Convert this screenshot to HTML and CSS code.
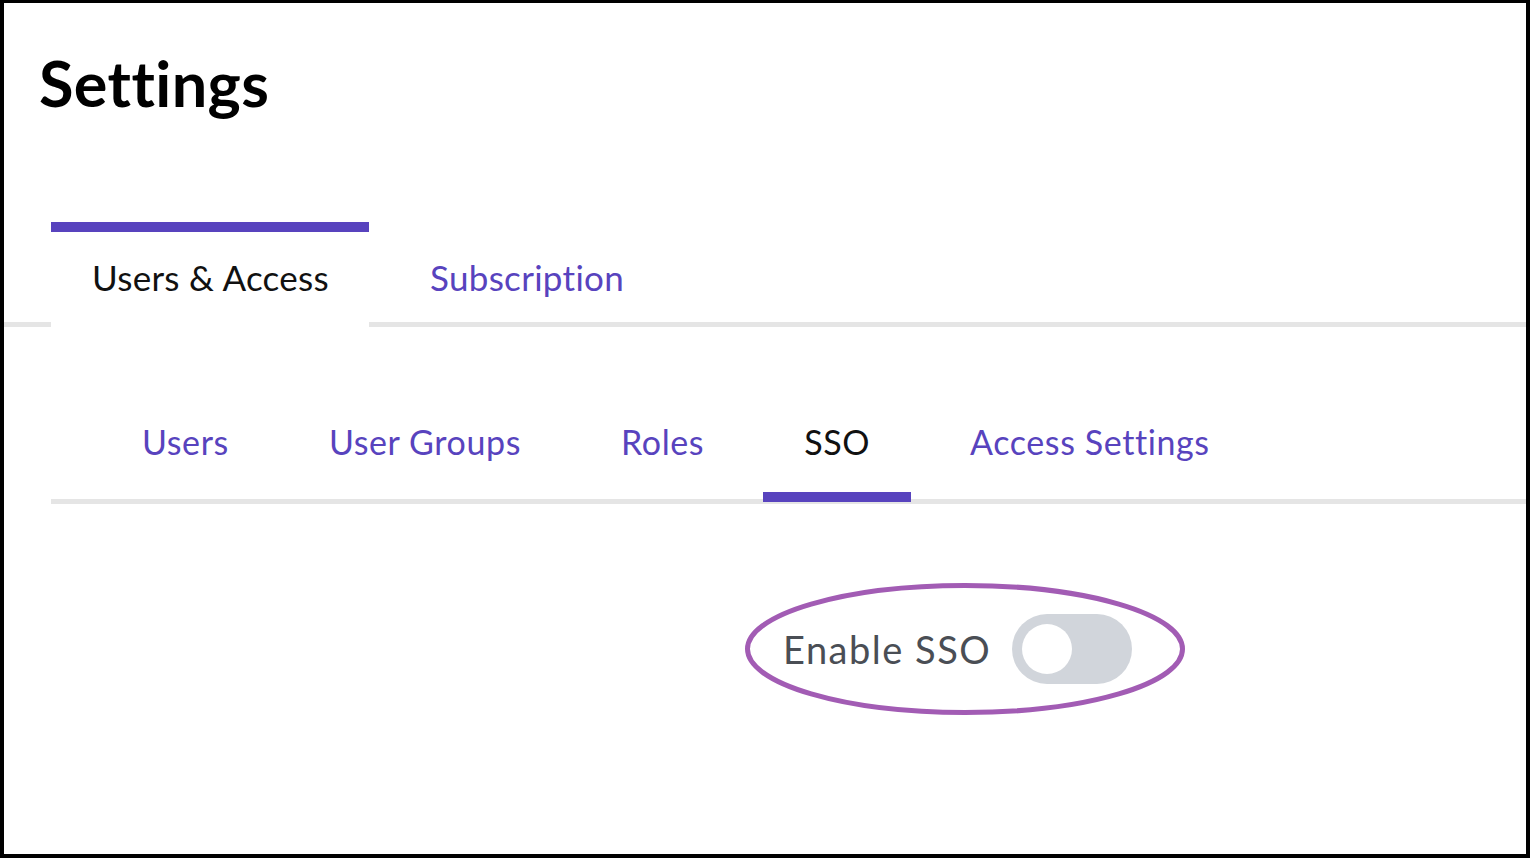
FILE: index.html
```html
<!DOCTYPE html>
<html lang="en">
<head>
<meta charset="utf-8">
<title>Settings</title>
<link rel="stylesheet" href="styles.css">
</head>
<body>
<div class="page">
  <h1 class="title">Settings</h1>
  <nav class="tabs">
    <a class="tab active">Users &amp; Access</a>
    <a class="tab">Subscription</a>
  </nav>
  <nav class="subtabs">
    <a class="subtab">Users</a>
    <a class="subtab">User Groups</a>
    <a class="subtab">Roles</a>
    <a class="subtab active">SSO</a>
    <a class="subtab">Access Settings</a>
  </nav>
  <div class="sso-row">
    <span class="sso-label">Enable SSO</span>
    <span class="toggle"><span class="knob"></span></span>
    <svg class="highlight" width="440" height="132" viewBox="0 0 440 132" aria-hidden="true">
      <ellipse cx="220" cy="66" rx="217.5" ry="63.5" fill="none" stroke="#a25cb4" stroke-width="5"/>
    </svg>
  </div>
</div>
</body>
</html>
```
FILE: styles.css
```css
html, body {
  margin: 0;
  padding: 0;
  background: #ffffff;
}

.page {
  box-sizing: border-box;
  width: 1530px;
  height: 858px;
  border-style: solid;
  border-color: #000000;
  border-width: 3px 4px 4px 4px;
  font-family: Lato, "Liberation Sans", sans-serif;
  overflow: hidden;
  background: #ffffff;
}

.title {
  margin: 42px 0 0 35px;
  font-size: 63px;
  font-weight: 700;
  line-height: 76px;
  color: #000000;
  letter-spacing: 0.4px;
}

.tabs {
  display: flex;
  align-items: flex-start;
  gap: 20px;
  margin-top: 101px;
  padding-left: 47px;
  border-bottom: 5px solid #e5e5e5;
}

.tab {
  display: block;
  padding: 24px 40px 24px 41px;
  border-top: 10px solid transparent;
  font-size: 35px;
  line-height: 42px;
  letter-spacing: 0.3px;
  color: #5843be;
  background: #ffffff;
}

.tab.active {
  border-top-color: #5843be;
  color: #111111;
  margin-bottom: -5px;
  padding-bottom: 29px;
}

.subtabs {
  display: flex;
  align-items: flex-start;
  gap: 18px;
  margin: 95px 0 0 47px;
  padding-left: 50px;
  border-bottom: 5px solid #e5e5e5;
}

.subtab {
  display: block;
  padding: 0 41px 30px 41px;
  border-bottom: 10px solid transparent;
  margin-bottom: -3px;
  font-size: 34px;
  line-height: 40px;
  letter-spacing: 0.6px;
  color: #5843be;
}

.subtab.active {
  border-bottom-color: #5843be;
  color: #111111;
}

.sso-row {
  position: relative;
  display: flex;
  align-items: center;
  gap: 21px;
  width: max-content;
  margin: 110px 0 0 779px;
}

.sso-label {
  font-size: 38px;
  line-height: 44px;
  letter-spacing: 1.5px;
  color: #4a4e55;
}

.toggle {
  box-sizing: border-box;
  display: flex;
  align-items: center;
  width: 120px;
  height: 70px;
  padding: 10px;
  border-radius: 35px;
  background: #d1d5db;
}

.knob {
  width: 50px;
  height: 50px;
  border-radius: 50%;
  background: #ffffff;
}

.highlight {
  position: absolute;
  left: -38px;
  top: -31px;
  pointer-events: none;
}
```
